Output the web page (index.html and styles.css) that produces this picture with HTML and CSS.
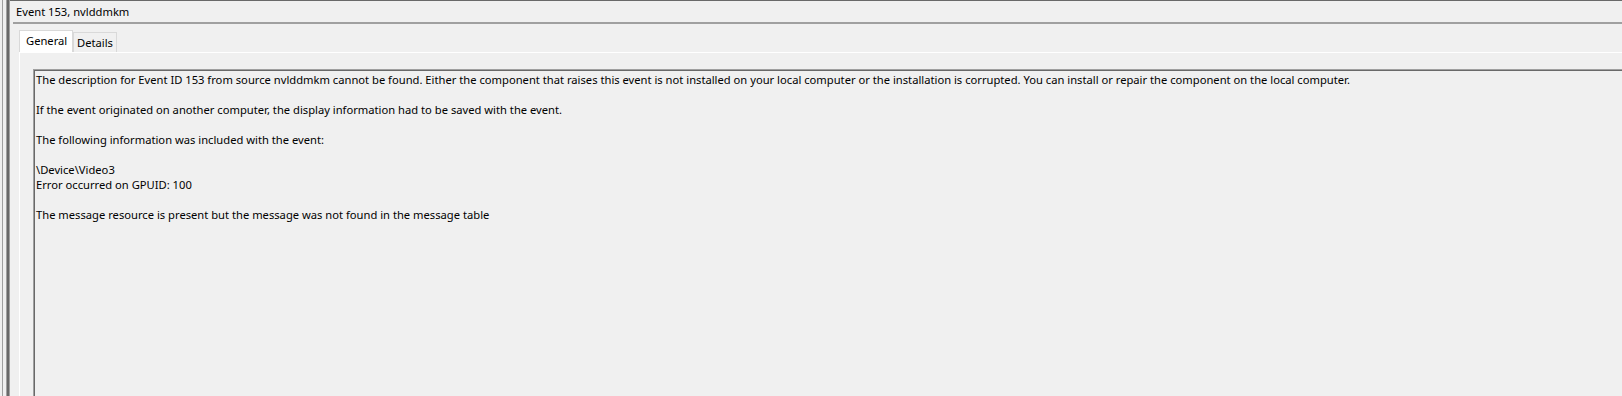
FILE: index.html
```html
<!DOCTYPE html>
<html lang="en">
<head>
<meta charset="utf-8">
<title>Event 153, nvlddmkm</title>
<link rel="stylesheet" href="styles.css">
</head>
<body>
<div class="window">
  <div class="edge-single"></div>
  <div class="edge-double"></div>
  <div class="main">
    <div class="titlebar">Event 153, nvlddmkm</div>
    <div class="tabctl">
      <div class="tabs">
        <div class="tab tab-active">General</div>
        <div class="tab">Details</div>
      </div>
      <div class="tabpane">
        <div class="desc">
          <p>The description for Event ID 153 from source nvlddmkm cannot be found. Either the component that raises this event is not installed on your local computer or the installation is corrupted. You can install or repair the component on the local computer.</p>
          <p>If the event originated on another computer, the display information had to be saved with the event.</p>
          <p>The following information was included with the event:</p>
          <p>\Device\Video3<br>Error occurred on GPUID: 100</p>
          <p>The message resource is present but the message was not found in the message table</p>
        </div>
      </div>
    </div>
  </div>
</div>
</body>
</html>
```
FILE: styles.css
```css
html, body {
  margin: 0;
  padding: 0;
  height: 100%;
  overflow: hidden;
  background: #f0f0f0;
}

body {
  font-family: "Noto Sans", "Open Sans", sans-serif;
  font-size: 11.2px;
  color: #000;
}

.window {
  display: flex;
  height: 100vh;
  padding-left: 2px;
  box-sizing: border-box;
}

.edge-single {
  width: 1px;
  background: #a0a0a0;
  margin-right: 3px;
  flex: none;
}

.edge-double {
  width: 4px;
  flex: none;
  background: linear-gradient(to right, #a0a0a0 0 1px, #696969 1px 3px, #a0a0a0 3px 4px);
}

.main {
  flex: 1;
  display: flex;
  flex-direction: column;
  border-top: 1px solid #696969;
  min-width: 0;
}

.titlebar {
  height: 21px;
  line-height: 21px;
  margin-left: 3px;
  padding-left: 3px;
  border-bottom: 2px solid #a0a0a0;
  white-space: nowrap;
}

.tabctl {
  flex: 1;
  display: flex;
  flex-direction: column;
  margin-left: 9px;
  margin-top: 6px;
  min-height: 0;
}

.tabs {
  display: flex;
  align-items: flex-end;
  height: 22px;
  flex: none;
}

.tab {
  box-sizing: border-box;
  height: 20px;
  line-height: 20px;
  width: 44px;
  padding-left: 3px;
  border: 1px solid #d9d9d9;
  border-bottom: none;
  background: #f0f0f0;
  white-space: nowrap;
}

.tab-active {
  height: 22px;
  line-height: 20px;
  width: 54px;
  padding-left: 6px;
  background: #fff;
}

.tabpane {
  flex: 1;
  display: flex;
  flex-direction: column;
  border-top: 1px solid #fff;
  border-left: 1px solid #fff;
  padding: 16px 0 0 13px;
  min-height: 0;
}

.desc {
  flex: 1;
  min-height: 0;
  overflow: hidden;
  border-top: 1px solid #a0a0a0;
  border-left: 1px solid #a0a0a0;
  box-shadow: inset 1px 1px 0 #696969;
  padding: 2px 0 0 2px;
  line-height: 15px;
  white-space: nowrap;
}

.desc p {
  margin: 0 0 15px;
}
```
